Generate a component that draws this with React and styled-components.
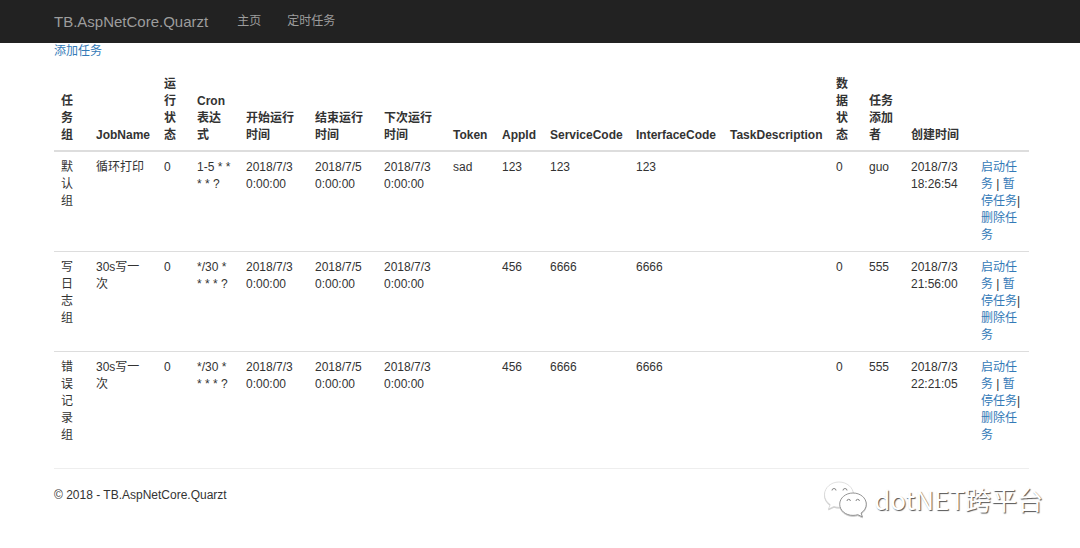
import React from "react";
import styled, { createGlobalStyle } from "styled-components";

const GlobalStyle = createGlobalStyle`
  * {
    box-sizing: border-box;
  }
  body {
    margin: 0;
    background-color: #fff;
    color: #333;
    font-family: "Liberation Sans", "Noto Sans CJK SC", sans-serif;
    font-size: 12px;
    line-height: 17px;
  }
`;

const Navbar = styled.nav`
  display: flex;
  align-items: center;
  height: 43px;
  padding: 0 51px 0 54px;
  background-color: #222;
`;

const Brand = styled.a`
  margin-right: 16px;
  font-size: 15px;
  color: #9d9d9d;
  text-decoration: none;
`;

const Menu = styled.ul`
  display: flex;
  margin: 0;
  padding: 0;
  list-style: none;
`;

const MenuLink = styled.a`
  display: block;
  padding: 13px;
  color: #9d9d9d;
  text-decoration: none;
`;

const Container = styled.main`
  padding: 0 51px 0 54px;
`;

const Link = styled.a`
  color: #337ab7;
  text-decoration: none;
`;

const Toolbar = styled.div`
  margin-bottom: 8px;
`;

const Table = styled.table`
  width: 100%;
  table-layout: fixed;
  border-collapse: separate;
  border-spacing: 0;
`;

const Col = styled.col`
  width: ${(props) => props.$width}px;
`;

const Th = styled.th`
  padding: 8px 7px 6px;
  border-bottom: 2px solid #ddd;
  text-align: left;
  vertical-align: bottom;
`;

const Td = styled.td`
  padding: 7px;
  vertical-align: top;
  tr + tr > & {
    border-top: 1px solid #ddd;
  }
`;

const Footer = styled.footer`
  position: relative;
  margin-top: 17px;
  padding: 18px 0;
  border-top: 1px solid #eee;
`;

const Watermark = styled.div`
  position: absolute;
  top: 8px;
  right: -14px;
  display: flex;
  align-items: center;
  gap: 7px;
  color: #fff;
  font-family: "Noto Sans CJK SC", sans-serif;
  font-size: 26px;
  line-height: 44px;
  text-shadow: 1px 1px 1px #555;
`;

const WechatIcon = styled.svg`
  width: 44px;
  height: 38px;
  filter: drop-shadow(0 1px 0 #ccc);
`;

const columns = [
  { title: "任务组", key: "group", width: 35 },
  { title: "JobName", key: "name", width: 68 },
  { title: "运行状态", key: "runStatus", width: 33 },
  { title: "Cron表达式", key: "cron", width: 49 },
  { title: "开始运行时间", key: "start", width: 69 },
  { title: "结束运行时间", key: "end", width: 69 },
  { title: "下次运行时间", key: "next", width: 69 },
  { title: "Token", key: "token", width: 49 },
  { title: "AppId", key: "appId", width: 48 },
  { title: "ServiceCode", key: "serviceCode", width: 86 },
  { title: "InterfaceCode", key: "interfaceCode", width: 94 },
  { title: "TaskDescription", key: "description", width: 106 },
  { title: "数据状态", key: "dataStatus", width: 33 },
  { title: "任务添加者", key: "author", width: 42 },
  { title: "创建时间", key: "created", width: 70 },
];

const jobs = [
  {
    group: "默认组",
    name: "循环打印",
    runStatus: 0,
    cron: "1-5 * * * * ?",
    start: "2018/7/3 0:00:00",
    end: "2018/7/5 0:00:00",
    next: "2018/7/3 0:00:00",
    token: "sad",
    appId: "123",
    serviceCode: "123",
    interfaceCode: "123",
    dataStatus: 0,
    author: "guo",
    created: "2018/7/3 18:26:54",
  },
  {
    group: "写日志组",
    name: "30s写一次",
    runStatus: 0,
    cron: "*/30 * * * * ?",
    start: "2018/7/3 0:00:00",
    end: "2018/7/5 0:00:00",
    next: "2018/7/3 0:00:00",
    appId: "456",
    serviceCode: "6666",
    interfaceCode: "6666",
    dataStatus: 0,
    author: "555",
    created: "2018/7/3 21:56:00",
  },
  {
    group: "错误记录组",
    name: "30s写一次",
    runStatus: 0,
    cron: "*/30 * * * * ?",
    start: "2018/7/3 0:00:00",
    end: "2018/7/5 0:00:00",
    next: "2018/7/3 0:00:00",
    appId: "456",
    serviceCode: "6666",
    interfaceCode: "6666",
    dataStatus: 0,
    author: "555",
    created: "2018/7/3 22:21:05",
  },
];

const App = () => {
  return (
    <>
      <GlobalStyle />
      <Navbar>
        <Brand href="#">TB.AspNetCore.Quarzt</Brand>
        <Menu>
          <li>
            <MenuLink href="#">主页</MenuLink>
          </li>
          <li>
            <MenuLink href="#">定时任务</MenuLink>
          </li>
        </Menu>
      </Navbar>
      <Container>
        <Toolbar>
          <Link href="#">添加任务</Link>
        </Toolbar>
        <Table>
          <colgroup>
            {columns.map((col) => (
              <Col key={col.key} $width={col.width} />
            ))}
            <Col $width={55} />
          </colgroup>
          <thead>
            <tr>
              {columns.map((col) => (
                <Th key={col.key}>{col.title}</Th>
              ))}
              <Th />
            </tr>
          </thead>
          <tbody>
            {jobs.map((job) => (
              <tr key={job.group}>
                {columns.map((col) => (
                  <Td key={col.key}>{job[col.key]}</Td>
                ))}
                <Td>
                  <Link href="#">启动任务</Link> | <Link href="#">暂停任务</Link>|{" "}
                  <Link href="#">删除任务</Link>
                </Td>
              </tr>
            ))}
          </tbody>
        </Table>
        <Footer>
          © 2018 - TB.AspNetCore.Quarzt
          <Watermark>
            <WechatIcon viewBox="0 0 44 38" fill="#fff" aria-hidden="true">
              <path
                stroke="#ccc"
                strokeWidth="0.6"
                d="M16 2C8 2 1.500 7.600 1.500 14.700c0 4 2.200 7.500 5.700 9.900L5.500 29l5.500-2.600c2 .6 3.500 .9 5 .9 8 0 14.500-5.600 14.500-12.600S24 2 16 2z"
              />
              <path
                stroke="#888"
                strokeWidth="0.9"
                d="M30 13c-7.400 0-13.300 5-13.300 11.200S22.600 35.400 30 35.400c1.700 0 3.300-.3 4.800-.7l4.600 2.200-1.300-3.900c3.200-2 5.200-5.200 5.200-8.800C43.300 18 37.400 13 30 13z"
              />
              <g fill="none" stroke="#888" strokeWidth="1">
                <path d="M9 10.500a2 2 0 0 1 4 0M20 10.500a2 2 0 0 1 4 0" />
                <path d="M24 21a1.700 1.700 0 0 1 3.400 0M33 21a1.700 1.700 0 0 1 3.400 0" />
              </g>
            </WechatIcon>
            dotNET跨平台
          </Watermark>
        </Footer>
      </Container>
    </>
  );
};

export default App;
